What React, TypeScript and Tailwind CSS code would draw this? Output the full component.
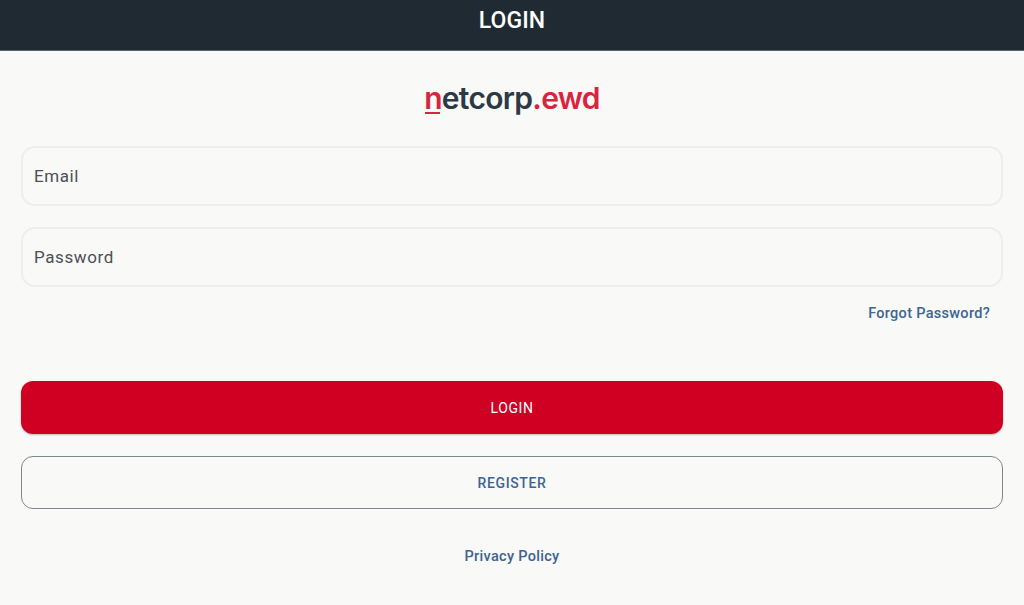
export default function App() {
  return (
    <div className="flex h-[605px] w-full flex-col overflow-hidden bg-[#f9f9f8] font-['Roboto',sans-serif]">
      <header className="flex h-[51px] shrink-0 items-center justify-center border-b border-[#5b6670] bg-[#202a33] pb-[10px]">
        <h1 className="text-[23px] font-medium leading-none tracking-[0.05px] text-white">LOGIN</h1>
      </header>

      <main className="flex flex-col px-[21px]">
        <div className="mt-[27px] flex h-[40px] items-center justify-center font-['Inter',sans-serif] text-[30px] font-semibold leading-none tracking-[-0.7px]">
          <span className="relative text-[#d8253f]">
            n
            <span className="absolute bottom-[-1px] left-[1px] h-[2px] w-[15px] bg-[#d8253f]" />
          </span>
          <span className="text-[#2c3a45]">etcorp</span>
          <span className="text-[#d8253f]">.ewd</span>
        </div>

        <label className="mt-[28px] flex h-[60px] items-center rounded-[14px] border-2 border-[#eeeeee] px-[11px] pt-[2px] text-[17px] tracking-[0.6px] text-[#4d4f55]">
          Email
        </label>
        <label className="mt-[21px] flex h-[60px] items-center rounded-[14px] border-2 border-[#eeeeee] px-[11px] pt-[2px] text-[17px] tracking-[0.6px] text-[#4d4f55]">
          Password
        </label>

        <div className="mt-[17px] flex justify-end pr-[13px]">
          <a className="text-[14.5px] font-medium leading-[20px] tracking-[0.3px] text-[#3d6591]">Forgot Password?</a>
        </div>

        <button className="mt-[57px] flex h-[53px] items-center justify-center rounded-[12px] bg-[#cf0022] pt-[2px] text-[14px] font-normal tracking-[0.6px] text-white shadow-[0_1px_2px_rgba(0,0,0,0.25)]">
          LOGIN
        </button>
        <button className="mt-[22px] flex h-[53px] items-center justify-center rounded-[12px] border border-[#7f8590] pt-[2px] text-[14px] font-medium tracking-[0.6px] text-[#3d6591]">
          REGISTER
        </button>

        <div className="mt-[38px] flex justify-center">
          <a className="text-[14.5px] font-medium leading-[20px] tracking-[0.3px] text-[#3d6591]">Privacy Policy</a>
        </div>
      </main>
    </div>
  );
}
